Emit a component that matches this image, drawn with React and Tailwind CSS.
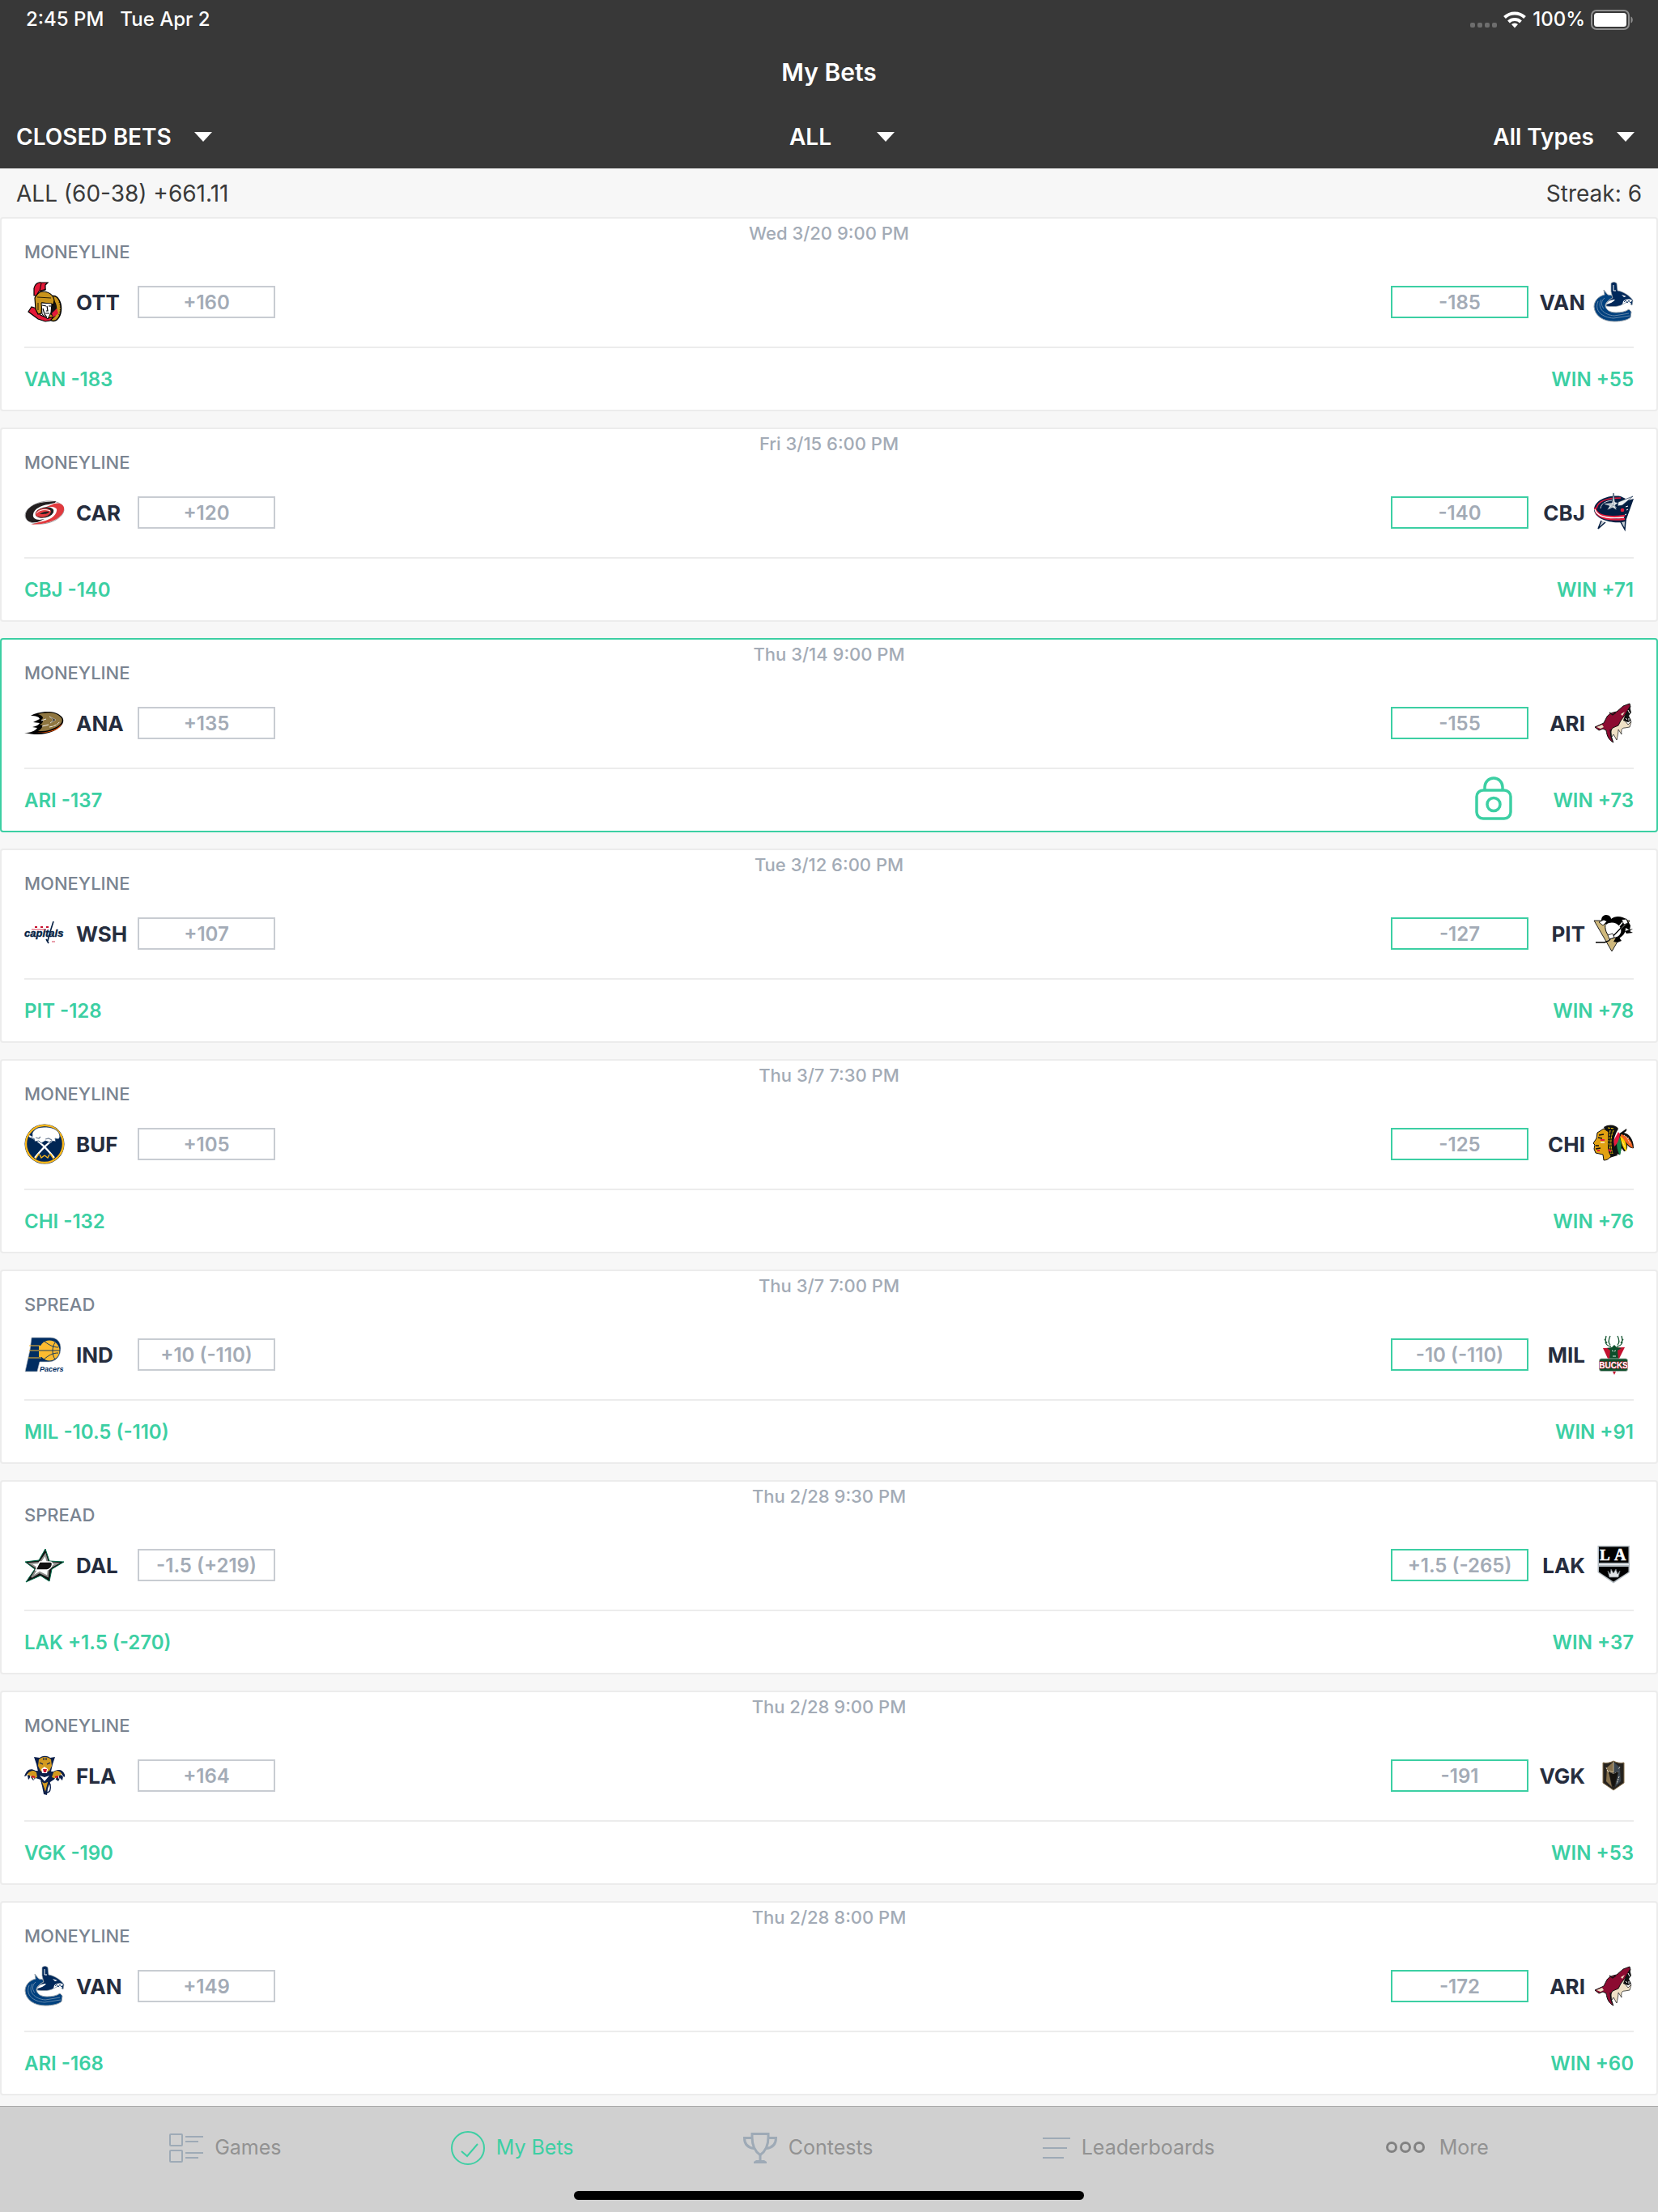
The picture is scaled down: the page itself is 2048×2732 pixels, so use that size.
import clsx from "clsx";

const bets = [
  { date: "Wed 3/20 9:00 PM", type: "MONEYLINE", away: "OTT", awayOdds: "+160", home: "VAN", homeOdds: "-185", pick: "VAN -183", result: "WIN +55" },
  { date: "Fri 3/15 6:00 PM", type: "MONEYLINE", away: "CAR", awayOdds: "+120", home: "CBJ", homeOdds: "-140", pick: "CBJ -140", result: "WIN +71" },
  { date: "Thu 3/14 9:00 PM", type: "MONEYLINE", away: "ANA", awayOdds: "+135", home: "ARI", homeOdds: "-155", pick: "ARI -137", result: "WIN +73", locked: true },
  { date: "Tue 3/12 6:00 PM", type: "MONEYLINE", away: "WSH", awayOdds: "+107", home: "PIT", homeOdds: "-127", pick: "PIT -128", result: "WIN +78" },
  { date: "Thu 3/7 7:30 PM", type: "MONEYLINE", away: "BUF", awayOdds: "+105", home: "CHI", homeOdds: "-125", pick: "CHI -132", result: "WIN +76" },
  { date: "Thu 3/7 7:00 PM", type: "SPREAD", away: "IND", awayOdds: "+10 (-110)", home: "MIL", homeOdds: "-10 (-110)", pick: "MIL -10.5 (-110)", result: "WIN +91" },
  { date: "Thu 2/28 9:30 PM", type: "SPREAD", away: "DAL", awayOdds: "-1.5 (+219)", home: "LAK", homeOdds: "+1.5 (-265)", pick: "LAK +1.5 (-270)", result: "WIN +37" },
  { date: "Thu 2/28 9:00 PM", type: "MONEYLINE", away: "FLA", awayOdds: "+164", home: "VGK", homeOdds: "-191", pick: "VGK -190", result: "WIN +53" },
  { date: "Thu 2/28 8:00 PM", type: "MONEYLINE", away: "VAN", awayOdds: "+149", home: "ARI", homeOdds: "-172", pick: "ARI -168", result: "WIN +60" },
];

// Team marks, all drawn on a 50x50 board
const logos = {
  OTT: (
    <>
      <ellipse cx="36" cy="33" rx="9.5" ry="15.5" fill="#c8941c" stroke="#000" strokeWidth="1.5" />
      <path d="M36 22c5 5 6 15 1 22l-5-4V24z" fill="#111" />
      <path d="M43 25c2 5 2 12-1 17" fill="none" stroke="#000" strokeWidth="1" strokeDasharray="1 2" />
      <path d="M5 37l4-6 6 2 5 8 9 4 8-2-5 5-6 1-9-3z" fill="#e31837" stroke="#000" strokeWidth="1.2" />
      <path d="M40 33l2 6-6 5-2-5z" fill="#e31837" />
      <path d="M14 34l-1-14c2-5 5-7 9-8 8 0 14 4 15 11l-1 5-14-2-1 13-4 1z" fill="#c8941c" stroke="#000" strokeWidth="1.2" />
      <path d="M12 17V8c1-5 5-8 9-7h8l-3 3v6l-8 2-3 5z" fill="#e31837" stroke="#000" strokeWidth="1.2" />
      <path d="M21 2l-2 9" stroke="#000" strokeWidth="1" />
      <path d="M20 11l7-2M16 19l17 1M17 26v9" fill="none" stroke="#000" strokeWidth="0.8" />
      <path d="M21 26l13 1-1 11-4 8-7-6z" fill="#fff" stroke="#000" strokeWidth="1" />
      <path d="M22 29l5 1M30 30h3M28 30l1 6h-2M26 39h5M23 33l2 7 3 4" fill="none" stroke="#000" strokeWidth="1.2" />
    </>
  ),
  VAN: (
    <>
      <path d="M13 10l4 5c1 2 4 1 6 2l1 3c-5 2-9 6-9 10 1 5 6 8 13 8 6 0 12-1 16-4l3 3-1 7c-3 3-11 5-20 5C12 49 2 42 1 31c0-7 5-13 13-15z" fill="#00417f" stroke="#9aa3ab" strokeWidth="1" />
      <path d="M6 24c-5 12 5 20 19 21l20-3M10 22c-6 10 3 19 16 20l18-3M14 20c-4 3-5 9-1 13" fill="none" stroke="#8fa3ba" strokeWidth="0.7" />
      <path d="M22 12V2c2-2 5-2 7 0l1 9c7 1 15 6 19 12l-1 6-6-4-6 3c-5 3-12 3-20 2 0-4 4-8 8-10z" fill="#00285a" stroke="#9aa3ab" strokeWidth="0.7" />
      <path d="M25 4v7h3" fill="none" stroke="#fff" strokeWidth="1" />
      <path d="M16 28c2-4 6-6 11-6-2 3-6 5-11 6zM35 16l6 2-3 1z" fill="#fff" />
      <path d="M37 24c4-3 8-3 11-1l-2 5-5-3-5 3z" fill="#fff" />
      <path d="M38 25l2-2 2 3 2-3 2 3 2-2" fill="none" stroke="#00285a" strokeWidth="0.9" />
    </>
  ),
  CAR: (
    <>
      <ellipse cx="25" cy="25" rx="24.3" ry="13.5" transform="rotate(-12 25 25)" fill="#fff" stroke="#8d8f92" strokeWidth="0.8" />
      <path d="M2 31C0 21 11 13 27 12l12-1-1 2-8 2c-10 1-18 6-19 12-1 4 2 7 8 7l6-1-9 4C8 38 3 36 2 31z" fill="#231f20" />
      <path d="M37 14c8-2 13 2 12 8-2 9-14 15-28 17l-13 1 10-3c12-2 21-7 22-14 1-3-2-5-8-5l-7 1z" fill="#e03a3e" />
      <ellipse cx="25" cy="25" rx="11.5" ry="6.5" transform="rotate(-12 25 25)" fill="#231f20" />
      <path d="M14 26c1-4 8-7 14-6 4 1 5 3 5 4-2 6-10 8-17 6-2-1-2-2-2-4z" fill="#e03a3e" />
      <path d="M15 26c3-4 10-6 17-3" fill="none" stroke="#fff" strokeWidth="1" />
      <path d="M19 27c2-2 8-4 12-3-2 3-6 3-12 3z" fill="#231f20" />
    </>
  ),
  ANA: (
    <>
      <path d="M8 16c8-5 30-9 39 2 4 6-2 13-11 17-11 5-23 5-36 2 8 0 13-2 16-6l-6-1c5-1 8-3 9-5l-8-1 8-4c-1-3-5-4-11-4z" fill="#000" />
      <path d="M13 36c14 2 28-2 34-11-3 9-18 14-34 11z" fill="#f95602" />
      <path d="M17 14c10-3 24-3 29 5 3 5-3 10-11 13-6 3-12 3-18 3 3-2 5-4 6-7l-4-1c3-1 4-3 4-5l-2-1 2-2c0-2-2-4-6-5z" fill="#8f7640" />
      <path d="M21 22l6-2M22 29l8-2" fill="none" stroke="#fff" strokeWidth="0.9" />
      <path d="M31 17l8 4-7 4 4-4z" fill="#000" stroke="#fff" strokeWidth="0.5" />
      <path d="M31 30c6-1 10-3 13-7" fill="none" stroke="#fff" strokeWidth="0.9" strokeDasharray="4 1" />
    </>
  ),
  CBJ: (
    <>
      <path d="M10 35L6 45l9-8M33 35l6 11 1-12" fill="#c8ced3" stroke="#041e42" strokeWidth="1.5" />
      <path d="M1 21C2 9 20 3 34 5l6 3-4 4 14-4-10 28c-14 4-39-2-39-15z" fill="#041e42" />
      <path d="M2 19c2 10 16 13 37 10M3 24c4 8 18 11 36 9" fill="none" stroke="#e31b3c" strokeWidth="2.4" />
      <path d="M2 21c3 10 17 12 36 10" fill="none" stroke="#fff" strokeWidth="1.4" />
      <path d="M4 20C6 9 20 7 34 7" fill="none" stroke="#e31b3c" strokeWidth="1.6" />
      <path d="M9 20c1-7 7-9 14-10" fill="none" stroke="#fff" strokeWidth="0.8" />
      <path d="M25 1l2 11 4 1-4 3 2 6-5-3-7 3 3-5-8-3 11-1z" fill="#dde2e6" stroke="#041e42" strokeWidth="0.6" />
      <path d="M31 12l18-7-13 11-6 1z" fill="#eef1f3" stroke="#041e42" strokeWidth="0.6" />
      <path d="M25 4v12l-4 3M25 16l-10-1M25 16l4 3" fill="none" stroke="#8f9aa5" strokeWidth="0.8" />
      <circle cx="36" cy="22" r="2.3" fill="#e31b3c" />
      <path d="M40 18l3-1M39 28l2-1M41 22l2-1" stroke="#fff" strokeWidth="1" />
    </>
  ),
  ARI: (
    <>
      <path d="M28 23c6-4 10-9 17-17l-1 8-5 8 4 5 4-4-2 7-6 1c-3 0-5 1-4 8l-4-6c0 4-1 8-2 13l-4-7-2 3-2-12z" fill="#efe1c6" stroke="#111" strokeWidth="0.7" />
      <path d="M2 30l11-5 4-8c3-4 7-5 12-6l8-7 8-3 1 4-6 9-6 8-3 6-7 3c-4 5-3 11 1 18-6-3-8-8-9-15l-4-2-5 2z" fill="#8c0b31" stroke="#111" strokeWidth="1" />
      <path d="M4 30l7-3 2 3-4 2zM34 14l5-3-3 5z" fill="#efe1c6" />
      <path d="M45 4l2 8-3 4 3 6-4 2-6-2 3-9z" fill="#111" />
      <path d="M43 9l2 4M40 19l2 2M44 19v3" stroke="#fff" strokeWidth="1" />
      <path d="M20 12l4 3 4-3M21 33c0 5 1 9 3 14" fill="none" stroke="#111" strokeWidth="1.2" />
    </>
  ),
  WSH: (
    <>
      <text x="0" y="29" fontSize="13" fontStyle="italic" fill="#041e42" stroke="#041e42" strokeWidth="0.4" fontFamily="Liberation Sans, sans-serif">capitals</text>
      <path d="M36 10l-5 16-2 8M27 32l3 5" fill="none" stroke="#041e42" strokeWidth="1.6" />
      <path d="M9 20h18M34 35h4" stroke="#c8102e" strokeWidth="0.8" />
      <path d="M13 17h3M20 17h3M27 17h3" stroke="#c8102e" strokeWidth="2" />
    </>
  ),
  PIT: (
    <>
      <path d="M1 9h44L23 47z" fill="#cfb87c" stroke="#222" strokeWidth="1" />
      <path d="M15 13c1-5 14-4 18 1 5 6 4 13-1 15l-9 2c-7-4-9-12-8-18z" fill="#fff" stroke="#000" strokeWidth="1" />
      <path d="M10 9c0-5 3-7 6-7 4 0 6 3 6 5 5-4 13-4 20 1l4 7-1 6-5-3c0 7-4 11-8 12l3 4-5 2-5-1 3-5c6-3 8-8 5-13-4-6-12-7-17-3-1-3-3-5-6-5z" fill="#000" />
      <path d="M7 11l6-3 4 2-5 5z" fill="#fff" stroke="#000" strokeWidth="0.8" />
      <path d="M42 11L18 34M38 9L20 30" stroke="#fff" strokeWidth="1.3" />
      <path d="M42 10L19 34l-5 2H3" fill="none" stroke="#000" strokeWidth="1.4" />
      <path d="M35 8l6-1 2 5-5 2zM18 27l6-2 2 5-6 2z" fill="#fff" stroke="#000" strokeWidth="0.8" />
      <path d="M39 22l10-3-4 3 4 2-8 1z" fill="#000" />
    </>
  ),
  BUF: (
    <>
      <circle cx="25" cy="25" r="24.5" fill="#002654" />
      <circle cx="25" cy="25" r="23" fill="none" stroke="#fdb71a" strokeWidth="2.4" />
      <path d="M6 15c13 6 22 16 31 27M44 15C31 21 22 31 13 42" fill="none" stroke="#fff" strokeWidth="2.2" />
      <path d="M10 14c-1-3 2-7 7-9 9-2 19-1 24 4 4 4 3 9 1 10l-4-1 1 4-6-1-1 2-6-2-5 3-3-3-5 1-1-4-3 1z" fill="#fff" stroke="#002654" strokeWidth="0.7" />
      <path d="M14 17l4 1 2-2M26 19l4-1 4 2" fill="none" stroke="#6d7c91" strokeWidth="1.2" />
      <path d="M19 38l2 4 4-3M31 38l-2 4-4-3M14 43l4-6M36 43l-4-6" fill="none" stroke="#fdb71a" strokeWidth="1.4" />
    </>
  ),
  IND: (
    <>
      <path d="M9 4h23c9 0 13 6 13 13 0 10-6 17-15 17H19l-3 12H1l6-27z" fill="#002d62" stroke="#b9bec4" strokeWidth="0.7" />
      <path d="M6 14h13M6 20h13M5 29h16" stroke="#fdbb30" strokeWidth="1.2" />
      <circle cx="31" cy="20" r="12.5" fill="#fdbb30" />
      <path d="M18 14h10v14H18z" fill="#fdbb30" />
      <path d="M18 20h26M38 10c-4 6-4 15 0 21M25 9c6 4 10 7 17 7M24 31c6-5 11-8 18-8" fill="none" stroke="#002d62" strokeWidth="0.9" />
      <text x="19" y="46" fontSize="9" fontWeight="700" fontStyle="italic" fill="#002d62" stroke="#fff" strokeWidth="1.5" paintOrder="stroke" fontFamily="Liberation Sans, sans-serif">Pacers</text>
    </>
  ),
  CHI: (
    <>
      <path d="M31 13l10-7c1 2-1 4-3 5 6 1 12 8 12 19-4 1-6-2-8-4 1 6-2 8-4 8l-3-4-2 8-6-1-6-6z" fill="#111" />
      <path d="M34 13c7 1 14 7 15 17-4-1-9-8-15-14z" fill="#f26522" />
      <path d="M33 15c6 4 9 9 8 19-4-3-6-9-8-19z" fill="#ffd100" />
      <path d="M30 13c5 5 6 15 3 26-4-6-5-16-3-26z" fill="#18864b" />
      <path d="M31 10l-6 11 1 7c4-3 6-9 7-15z" fill="#e4173e" />
      <path d="M36 22l3 7M42 18l4 7M38 14l6 4" stroke="#fff" strokeWidth="1" strokeDasharray="1 1" />
      <path d="M13 4c6-4 15-3 18 2-4 7-6 13-6 20l5 13-13 4 2-25z" fill="#111" />
      <path d="M18 5l8 1M21 8l-2 14 3 15M25 8c-4 8-4 20-1 29" fill="none" stroke="#ffd100" strokeWidth="1" strokeDasharray="3 1" />
      <path d="M13 6L5 11l-1 7-4 6 2 2-1 5 2 5 9 2 1 7c4 0 7-2 9-5-4-6-4-14-3-30z" fill="#e2a112" stroke="#111" strokeWidth="1" />
      <path d="M6 17l5 1M7 14l6-1M3 27h4M3 31l6-1" fill="none" stroke="#111" strokeWidth="1.4" />
      <path d="M9 20h5M5 33h3M19 32l3 2" stroke="#e4173e" strokeWidth="2.2" />
      <path d="M9 23h5" stroke="#fff" strokeWidth="1.2" />
    </>
  ),
  MIL: (
    <>
      <path d="M12 17l27-1-7 14H18z" fill="#c41230" />
      <path d="M22 15c-7-1-8-5-6-13M21 13C18 10 19 6 21 2M17 11l-3-5M29 15c7-1 8-5 6-13M30 13c3-3 2-7 0-11M34 11l3-5" fill="none" stroke="#175733" strokeWidth="1.3" />
      <path d="M17 17l6-1 3-3 3 3 6 1-5 3 1 10H20l1-10z" fill="#0d4f2b" />
      <path d="M23 20l2 1M28 20l-2 1M24 27h4" stroke="#fff" strokeWidth="0.9" />
      <rect x="7.5" y="30" width="35" height="15.5" rx="2.5" fill="#0d4f2b" stroke="#aab5ae" strokeWidth="0.8" />
      <path d="M24 46h4l-2 4z" fill="#c41230" />
      <text x="25" y="42" textAnchor="middle" fontSize="10" fontWeight="700" fill="#fff" stroke="#c41230" strokeWidth="1" paintOrder="stroke" fontFamily="Liberation Sans, sans-serif">BUCKS</text>
    </>
  ),
  DAL: (
    <>
      <path d="M26 5l5 15 18 1-15 9-3 15-11-7-18 8 11-16L1 21l17-2z" fill="#111" stroke="#006847" strokeWidth="1" />
      <path d="M26 12l3 10 12 1-11 6-1 10-10-5-10 6 7-11-9-6 12-1z" fill="#fff" stroke="#8f8f8c" strokeWidth="2" />
      <path d="M19 21h13c5 0 2 9-4 10H14z" fill="#111" stroke="#fff" strokeWidth="1.4" />
    </>
  ),
  FLA: (
    <>
      <path d="M14 19C7 15 3 18 0 26l4-1 1 5 3-3 3 4 3-3 6 2 2 8 2 10 4 1 1-8 3-8 6-4 4 3 2-4 3 3 1-5 3 1c-2-9-7-11-15-7z" fill="#0b1f4b" />
      <path d="M15 21c-5-4-9-1-12 3l4 1 4 4 5-2zM36 21c5-4 9-1 11 3l-4 1-4 4-5-2z" fill="#d39a1f" />
      <path d="M2 26l3-3M7 29l1-4M12 30l-1-4M48 26l-3-3M43 29l-1-4M38 30l1-4" stroke="#fff" strokeWidth="1" />
      <path d="M9 26l4 1M38 27l4-1" stroke="#c8102e" strokeWidth="2" />
      <path d="M12 2l7 1c4-3 9-3 13 0l6-1-3 9-2 9-8 5-8-5-2-9z" fill="#0b1f4b" />
      <path d="M18 5c4-4 11-4 15 0l1 8-3 6-6 3-5-3-3-6z" fill="#d39a1f" />
      <path d="M19 9l4 2M32 9l-4 2M24 3v3M27 3v3" stroke="#0b1f4b" strokeWidth="1.2" />
      <path d="M21 17l4-3 4 3-1 5h-6zM19 25l6 2 6-2-6 7z" fill="#fff" />
      <path d="M23 17h5l-1 4h-3z" fill="#c8102e" />
      <path d="M21 32l4 2 5-2-2 7-2 8-2-7z" fill="#d39a1f" stroke="#0b1f4b" strokeWidth="1" />
      <path d="M27 46c5 0 6-4 5-10l-2-3" fill="none" stroke="#0b1f4b" strokeWidth="1.4" />
    </>
  ),
  LAK: (
    <>
      <path d="M5.5 1H45v33L25 47.5 5.5 34z" fill="#b4bcc2" />
      <path d="M7 2.5h36.500V22H7zM7 27h36.500v6.500L25 45.500 7 33.500z" fill="#000" />
      <path d="M7 24.5h37" stroke="#fff" strokeWidth="0.8" />
      <text x="8" y="19" fontSize="19" fill="#fff" stroke="#fff" strokeWidth="0.6" fontFamily="Liberation Serif, serif">L</text>
      <text x="26" y="19" fontSize="20" fill="#fff" stroke="#fff" strokeWidth="0.6" fontFamily="Liberation Serif, serif">A</text>
      <path d="M18 32l3 4 1-6 3 5 3-5 2 6 3-4-2 8H20z" fill="#dfe3e6" stroke="#6b7278" strokeWidth="0.8" />
    </>
  ),
  VGK: (
    <>
      <path d="M12 9c5 1 9 0 13-2 4 2 8 3 13 2v25L25 43 12 34z" fill="#26231f" stroke="#86714d" strokeWidth="1" />
      <path d="M25 8l-8 7-1 17 7 7-4-19 6 2z" fill="#86714d" />
      <path d="M25 8l8 7 1 17-7 7 4-19-6 2z" fill="#3b4650" />
      <path d="M25 8v13l-5-2" fill="none" stroke="#d5c59f" strokeWidth="0.8" />
      <path d="M16 15l2 5M33 14l-2 3M32 26l-3 9M18 20l7 3 7-3" fill="none" stroke="#e5dfcf" strokeWidth="1" strokeDasharray="2 1" />
      <path d="M19 20l6 3 6-3-5 18h-2z" fill="#15130f" />
    </>
  ),
};

function TeamLogo({ team }) {
  return (
    <svg viewBox="0 0 50 50" className="size-[50px] shrink-0" role="img" aria-label={team}>
      {logos[team]}
    </svg>
  );
}

function LockIcon() {
  return (
    <svg viewBox="0 0 46 54" className="mb-[6px] h-[54px] w-[46px]" fill="none" stroke="#3ccfa3" strokeWidth="3.5">
      <rect x="2" y="17" width="42" height="35" rx="8" />
      <path d="M12 17v-4a11 11 0 0 1 22 0v4" />
      <circle cx="23" cy="34.5" r="8" />
    </svg>
  );
}

function StatusBar() {
  return (
    <div className="flex h-12 items-center justify-between pr-[30px] pl-8 text-[24px] font-medium">
      <div className="flex gap-5">
        <span>2:45 PM</span>
        <span>Tue Apr 2</span>
      </div>
      <div className="flex items-center gap-[7px]">
        <div className="flex gap-[3px] pt-[14px]">
          {[0, 1, 2, 3].map(i => <span key={i} className="size-[6px] rounded-[2px] bg-[#6e6e6e]" />)}
        </div>
        <svg viewBox="0 0 30 22" className="h-[22px] w-[30px]" fill="none" stroke="#fff" strokeWidth="4">
          <path d="M2.500 8.500a18 18 0 0 1 25 0" />
          <path d="M7.500 14a11 11 0 0 1 15 0" />
          <path d="M15 21.500l-4-4.500a6 6 0 0 1 8 0z" fill="#fff" stroke="none" />
        </svg>
        <span>100%</span>
        <svg viewBox="0 0 53 25" className="h-[25px] w-[53px]">
          <rect x="1" y="1" width="46" height="23" rx="6" fill="none" stroke="#8f8f8f" strokeWidth="2" />
          <rect x="4" y="4" width="40" height="17" rx="3.5" fill="#fff" />
          <path d="M49.500 8.500c3 1 3 7 0 8z" fill="#8f8f8f" />
        </svg>
      </div>
    </div>
  );
}

function Filter({ label, options, className, gap }) {
  return (
    <div className={clsx("flex items-center", gap, className)}>
      <select aria-label={label} className="field-sizing-content appearance-none bg-transparent text-[28px] leading-9 font-semibold text-white outline-none">
        {options.map(o => <option key={o}>{o}</option>)}
      </select>
      <svg viewBox="0 0 22 12" className="pointer-events-none h-3 w-[22px]">
        <path d="M0 0h22L11 12z" fill="#fff" />
      </svg>
    </div>
  );
}

function Odds({ value, picked }) {
  return (
    <button className={clsx("h-10 w-[170px] border-2 pt-[2px] text-[24px] leading-8 font-semibold text-[#a3abb6]", picked ? "border-[#3ccfa3]" : "border-[#c8ccd2]")}>
      {value}
    </button>
  );
}

function BetCard({ bet }) {
  return (
    <article className={clsx("rounded-[4px] border-2 bg-white px-7", bet.locked ? "border-[#3ccfa3]" : "border-[#ececec]")}>
      <div className="grid grid-cols-3 text-[22px]">
        <h2 className="pt-[30px] leading-[22px] font-medium text-[#7a8491]">{bet.type}</h2>
        <time className="text-center leading-9 font-medium text-[#a3abb6]">{bet.date}</time>
      </div>
      <div className="flex items-center justify-between border-b-2 border-[#ececec] pt-[26px] pb-[30px] text-[26px] font-bold text-[#262d3e]">
        <div className="flex items-center">
          <TeamLogo team={bet.away} />
          <span className="ml-[14px] w-[76px]">{bet.away}</span>
          <Odds value={bet.awayOdds} />
        </div>
        <div className="flex items-center">
          <Odds value={bet.homeOdds} picked />
          <span className="mr-[10px] w-[70px] text-right">{bet.home}</span>
          <TeamLogo team={bet.home} />
        </div>
      </div>
      <div className="flex min-h-[76px] items-center justify-between pt-[2px] text-[24px] font-semibold text-[#3ccfa3]">
        <span>{bet.pick}</span>
        <div className="flex items-center gap-[50px]">
          {bet.locked && <LockIcon />}
          <span>{bet.result}</span>
        </div>
      </div>
    </article>
  );
}

const tabs = [
  {
    name: "Games",
    icon: (
      <svg viewBox="0 0 42 38" className="h-[38px] w-[42px]" fill="none" stroke="#9eaab6" strokeWidth="2">
        <rect x="1" y="2" width="15" height="14" rx="1" />
        <rect x="1" y="22" width="15" height="14" rx="1" />
        <path d="M20 5h22M20 11h16M20 25h22M20 31h16" />
      </svg>
    ),
  },
  {
    name: "My Bets",
    active: true,
    icon: (
      <svg viewBox="0 0 42 42" className="size-[42px]" fill="none" stroke="#3ccfa3" strokeWidth="2">
        <circle cx="21" cy="21" r="20" />
        <path d="M13 25l7 6 13-15" />
      </svg>
    ),
  },
  {
    name: "Contests",
    icon: (
      <svg viewBox="0 0 42 38" className="h-[38px] w-[42px]" fill="none" stroke="#9eaab6" strokeWidth="3">
        <path d="M11 1.500h20v4c0 11-4 18-10 22-6-4-10-11-10-22z" />
        <path d="M11 6.500H1.500c0 8 4 12 12 13M31 6.500h9.500c0 8-4 12-12 13" />
        <path d="M21 27v8" />
        <path d="M13 38v-2l3-2h10l3 2v2z" fill="#9eaab6" stroke="none" />
      </svg>
    ),
  },
  {
    name: "Leaderboards",
    icon: (
      <svg viewBox="0 0 34 26" className="h-[26px] w-[34px]" fill="none" stroke="#9eaab6" strokeWidth="2">
        <path d="M0 1h34M0 13h30M0 25h26" />
      </svg>
    ),
  },
  {
    name: "More",
    icon: (
      <svg viewBox="0 0 54 16" className="h-4 w-[54px]" fill="none" stroke="#828282" strokeWidth="3">
        <circle cx="9" cy="7" r="5.500" />
        <circle cx="26" cy="7" r="5.500" />
        <circle cx="43" cy="7" r="5.500" />
      </svg>
    ),
  },
];

function TabBar() {
  return (
    <nav className="border-t border-[#a8a8a8] bg-[#d0d0d0] pb-[15px]">
      <div className="flex h-[104px] items-center justify-evenly pb-[2px]">
        {tabs.map(tab => (
          <button key={tab.name} className={clsx("flex items-center gap-[14px] text-[25px]", tab.active ? "text-[#3ccfa3]" : "text-[#929292]")}>
            {tab.icon}
            {tab.name}
          </button>
        ))}
      </div>
      <div className="mx-auto h-[11px] w-[630px] rounded-full bg-black" />
    </nav>
  );
}

export default function App() {
  return (
    <div className="flex min-h-screen flex-col bg-[#f7f7f7] font-[Inter,sans-serif]">
      <header className="bg-[#383838] text-white">
        <StatusBar />
        <h1 className="text-center text-[30px] leading-[82px] font-semibold">My Bets</h1>
        <div className="grid h-[78px] grid-cols-3 items-center px-5">
          <Filter label="Bet status" options={["CLOSED BETS", "OPEN BETS"]} gap="gap-7" />
          <Filter label="League" options={["ALL", "NHL", "NBA"]} className="justify-center pl-8" gap="gap-14" />
          <Filter label="Bet type" options={["All Types", "Moneyline", "Spread"]} className="justify-end pr-[9px]" gap="gap-7" />
        </div>
      </header>

      <div className="flex items-center justify-between px-5 pt-[2px] text-[28px] leading-[58px] text-[#3a3a3a]">
        <span>ALL (60-38) +661.11</span>
        <span>Streak: 6</span>
      </div>

      <main className="flex flex-1 flex-col gap-5 pb-3">
        {bets.map(bet => <BetCard key={bet.date} bet={bet} />)}
      </main>

      <TabBar />
    </div>
  );
}
